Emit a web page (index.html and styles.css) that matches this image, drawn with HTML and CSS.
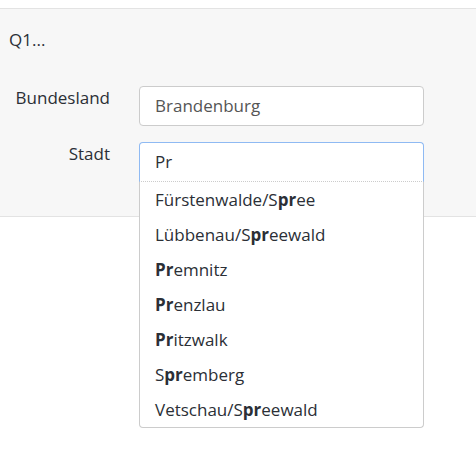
FILE: index.html
```html
<!DOCTYPE html>
<html lang="de">
<head>
<meta charset="utf-8">
<title>Q1</title>
<link rel="stylesheet" href="styles.css">
</head>
<body>
<div class="panel">
  <div class="title">Q1...</div>
  <form class="form">
    <div class="row">
      <label class="label">Bundesland</label>
      <div class="field">
        <div class="input">Brandenburg</div>
      </div>
    </div>
    <div class="row">
      <label class="label">Stadt</label>
      <div class="field">
        <div class="input input-focus">Pr</div>
        <ul class="menu">
          <li class="item">Fürstenwalde/S<b>pr</b>ee</li>
          <li class="item">Lübbenau/S<b>pr</b>eewald</li>
          <li class="item"><b>Pr</b>emnitz</li>
          <li class="item"><b>Pr</b>enzlau</li>
          <li class="item"><b>Pr</b>itzwalk</li>
          <li class="item">S<b>pr</b>emberg</li>
          <li class="item">Vetschau/S<b>pr</b>eewald</li>
        </ul>
      </div>
    </div>
  </form>
</div>
</body>
</html>
```
FILE: styles.css
```css
html, body {
  margin: 0;
  padding: 0;
  background: #ffffff;
}
body {
  min-height: 473px;
  font-family: "Open Sans", "Noto Sans", sans-serif;
  font-size: 17px;
  line-height: 22px;
  color: #2b2f36;
}
.panel {
  margin-top: 8px;
  background: #f7f7f7;
  border-top: 1px solid #e3e3e3;
  border-bottom: 1px solid #e3e3e3;
  padding: 20px 0 34px 9px;
}
.title {
  height: 22px;
}
.form {
  margin: 35px 0 0 0;
  display: flex;
  flex-direction: column;
  gap: 16px;
}
.row {
  display: flex;
  align-items: flex-start;
  gap: 29px;
}
.label {
  width: 101px;
  text-align: right;
  padding-top: 1px;
}
.field {
  position: relative;
  width: 285px;
}
.input {
  box-sizing: border-box;
  height: 40px;
  padding: 8px 15px;
  background: #ffffff;
  border: 1px solid #cccccc;
  border-radius: 4px;
  color: #555555;
}
.input-focus {
  color: #2b2f36;
  border-color: #8fbaf3;
  border-bottom: 1px dotted #cccccc;
  border-radius: 4px 4px 0 0;
}
.menu {
  position: absolute;
  left: 0;
  top: 40px;
  z-index: 2;
  width: 285px;
  box-sizing: border-box;
  margin: 0;
  padding: 0;
  list-style: none;
  background: #ffffff;
  border: 1px solid #cccccc;
  border-top: none;
  border-radius: 0 0 4px 4px;
}
.item {
  padding: 6.5px 15px;
  line-height: 22px;
  color: #2b2f36;
}
.item b {
  font-weight: 700;
}
```
